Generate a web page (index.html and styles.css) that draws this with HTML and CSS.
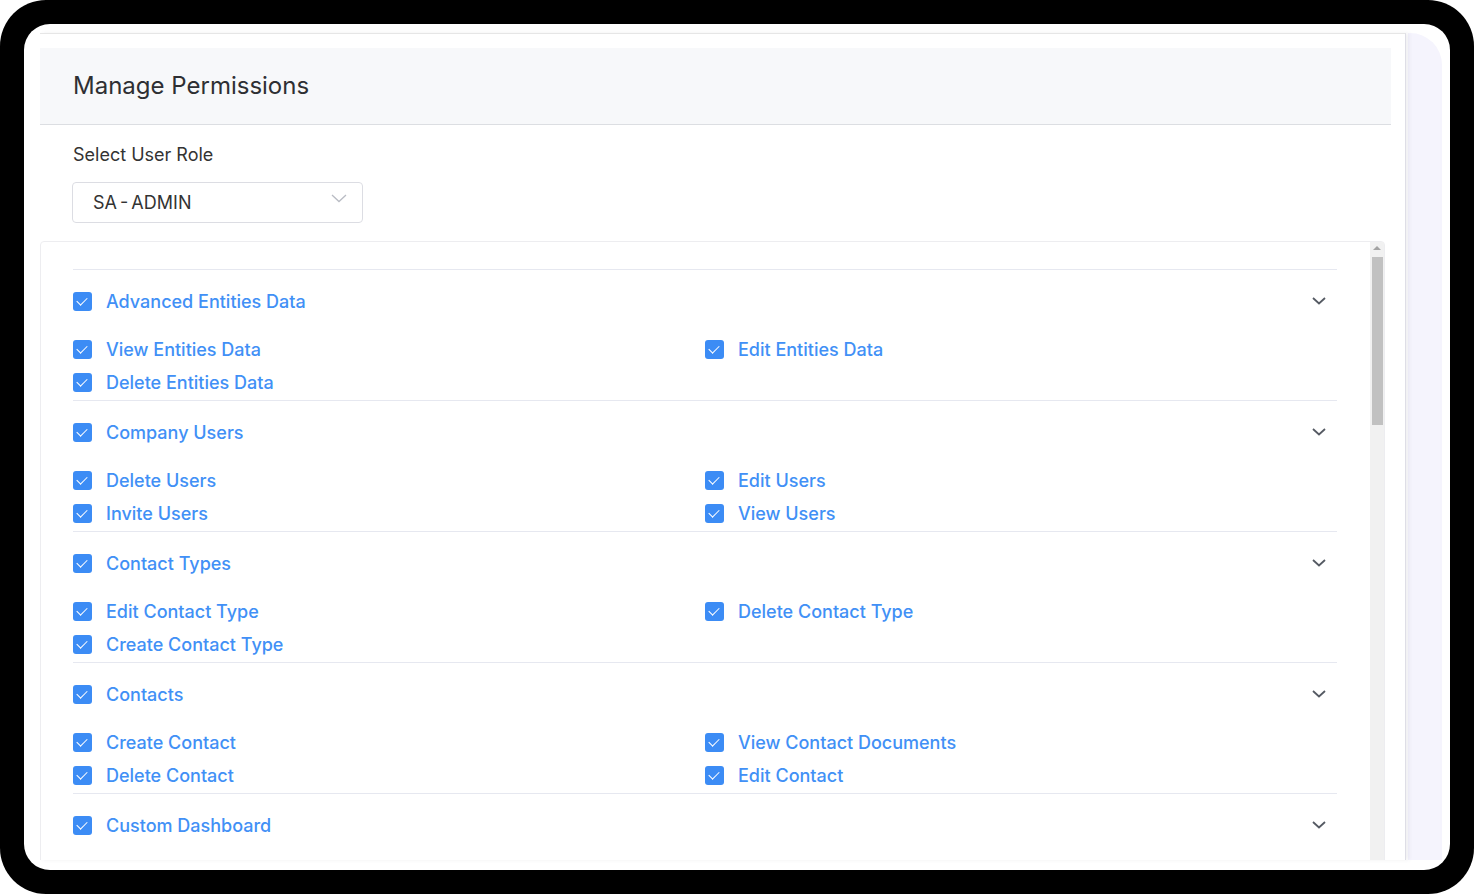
FILE: index.html
```html
<!DOCTYPE html>
<html lang="en">
<head>
  <meta charset="UTF-8" />
  <title>Manage Permissions</title>
  <link rel="stylesheet" href="styles.css">
</head>
<body>
  <div class="device">
    <div class="screen">
      <div class="panel">
        <div class="page-header">
          <h1>Manage Permissions</h1>
        </div>

        <div class="role-label">Select User Role</div>
        <div class="role-select">
          <span>SA - ADMIN</span>
          <svg width="16" height="9" viewBox="0 0 16 9"><path d="M1 1l7 6.5L15 1" fill="none" stroke="#b9bcc4" stroke-width="1.3"/></svg>
        </div>

        <div class="perm-box">
          <div class="perm-list">

            <div class="group">
              <div class="group-head">
                <label class="item"><span class="check"></span>Advanced Entities Data</label>
                <svg class="chev" width="16" height="10" viewBox="0 0 16 10"><path d="M2 2l6 5.5L14 2" fill="none" stroke="#555a63" stroke-width="1.8"/></svg>
              </div>
              <div class="group-items">
                <label class="item"><span class="check"></span>View Entities Data</label>
                <label class="item"><span class="check"></span>Edit Entities Data</label>
                <label class="item"><span class="check"></span>Delete Entities Data</label>
              </div>
            </div>

            <div class="group">
              <div class="group-head">
                <label class="item"><span class="check"></span>Company Users</label>
                <svg class="chev" width="16" height="10" viewBox="0 0 16 10"><path d="M2 2l6 5.5L14 2" fill="none" stroke="#555a63" stroke-width="1.8"/></svg>
              </div>
              <div class="group-items">
                <label class="item"><span class="check"></span>Delete Users</label>
                <label class="item"><span class="check"></span>Edit Users</label>
                <label class="item"><span class="check"></span>Invite Users</label>
                <label class="item"><span class="check"></span>View Users</label>
              </div>
            </div>

            <div class="group">
              <div class="group-head">
                <label class="item"><span class="check"></span>Contact Types</label>
                <svg class="chev" width="16" height="10" viewBox="0 0 16 10"><path d="M2 2l6 5.5L14 2" fill="none" stroke="#555a63" stroke-width="1.8"/></svg>
              </div>
              <div class="group-items">
                <label class="item"><span class="check"></span>Edit Contact Type</label>
                <label class="item"><span class="check"></span>Delete Contact Type</label>
                <label class="item"><span class="check"></span>Create Contact Type</label>
              </div>
            </div>

            <div class="group">
              <div class="group-head">
                <label class="item"><span class="check"></span>Contacts</label>
                <svg class="chev" width="16" height="10" viewBox="0 0 16 10"><path d="M2 2l6 5.5L14 2" fill="none" stroke="#555a63" stroke-width="1.8"/></svg>
              </div>
              <div class="group-items">
                <label class="item"><span class="check"></span>Create Contact</label>
                <label class="item"><span class="check"></span>View Contact Documents</label>
                <label class="item"><span class="check"></span>Delete Contact</label>
                <label class="item"><span class="check"></span>Edit Contact</label>
              </div>
            </div>

            <div class="group">
              <div class="group-head">
                <label class="item"><span class="check"></span>Custom Dashboard</label>
                <svg class="chev" width="16" height="10" viewBox="0 0 16 10"><path d="M2 2l6 5.5L14 2" fill="none" stroke="#555a63" stroke-width="1.8"/></svg>
              </div>
            </div>

          </div>

          <div class="scrollbar">
            <div class="scroll-up"></div>
            <div class="scroll-thumb"></div>
          </div>
        </div>
      </div>

      <div class="side"></div>
    </div>
  </div>
</body>
</html>
```

FILE: styles.css
```css
html, body {
  margin: 0;
  padding: 0;
  background: #fff;
  font-family: Inter, 'Noto Sans', sans-serif;
}

.device {
  width: 1474px;
  height: 894px;
  box-sizing: border-box;
  padding: 24px;
  background: #000;
  border-radius: 46px;
}

.screen {
  height: 100%;
  box-sizing: border-box;
  padding: 9px 8px 10px 16px;
  background: #fff;
  border-radius: 26px;
  display: flex;
  overflow: hidden;
}

.panel {
  width: 1366px;
  flex: none;
  box-sizing: border-box;
  padding: 14px 14px 0 0;
  background: #fff;
  border-top: 1px solid #e6e6e6;
  border-right: 1px solid #dedee6;
  box-shadow: 3px 0 4px rgba(60, 60, 90, 0.08);
  overflow: hidden;
  position: relative;
  z-index: 1;
}

.side {
  flex: 1;
  margin-left: 2px;
  background: #f5f4fd;
  border-top-right-radius: 32px;
}

.page-header {
  height: 77px;
  box-sizing: border-box;
  padding: 0 0 2px 33px;
  display: flex;
  align-items: center;
  background: #f7f8fa;
  border-bottom: 1px solid #dcdee2;
}

.page-header h1 {
  margin: 0;
  font-size: 24px;
  font-weight: 400;
  color: #2e2f33;
}

.role-label {
  margin: 19px 0 0 33px;
  font-size: 18px;
  line-height: 22px;
  color: #333;
}

.role-select {
  width: 291px;
  height: 41px;
  box-sizing: border-box;
  margin: 16px 0 0 32px;
  padding: 0 15px 0 20px;
  border: 1px solid #dcdde3;
  border-radius: 4px;
  display: flex;
  align-items: center;
  justify-content: space-between;
  font-size: 18px;
  word-spacing: -2px;
  color: #333;
}

.role-select svg {
  margin-top: -8px;
}

.perm-box {
  margin: 18px 6px 0 0;
  height: 640px;
  border: 1px solid #ededf0;
  border-radius: 4px;
  display: flex;
}

.perm-list {
  flex: 1;
  padding: 27px 33px 0 32px;
}

.group {
  border-top: 1px solid #e6e8f0;
  padding: 12px 0 1px;
}

.group-head {
  height: 38px;
  display: flex;
  align-items: center;
  justify-content: space-between;
  margin-bottom: 13px;
}

.chev {
  margin-right: 10px;
}

.group-items {
  display: grid;
  grid-template-columns: 1fr 1fr;
  grid-auto-rows: 33px;
}

.item {
  display: flex;
  align-items: center;
  gap: 14px;
  font-size: 18px;
  font-weight: 500;
  color: #4190f6;
}

.check {
  width: 19px;
  height: 19px;
  border-radius: 3px;
  background: #3c8cf5;
  position: relative;
  flex: none;
}

.check::after {
  content: "";
  position: absolute;
  left: 6px;
  top: 3px;
  width: 5px;
  height: 9px;
  border: solid #fff;
  border-width: 0 1.8px 1.8px 0;
  transform: rotate(45deg);
}

.scrollbar {
  width: 14px;
  flex: none;
  background: #f1f1f1;
  display: flex;
  flex-direction: column;
  align-items: center;
}

.scroll-up {
  margin-top: 4px;
  width: 0;
  height: 0;
  border-left: 4px solid transparent;
  border-right: 4px solid transparent;
  border-bottom: 4px solid #a3a3a3;
}

.scroll-thumb {
  margin-top: 7px;
  width: 11px;
  height: 168px;
  background: #c1c1c1;
}
```
